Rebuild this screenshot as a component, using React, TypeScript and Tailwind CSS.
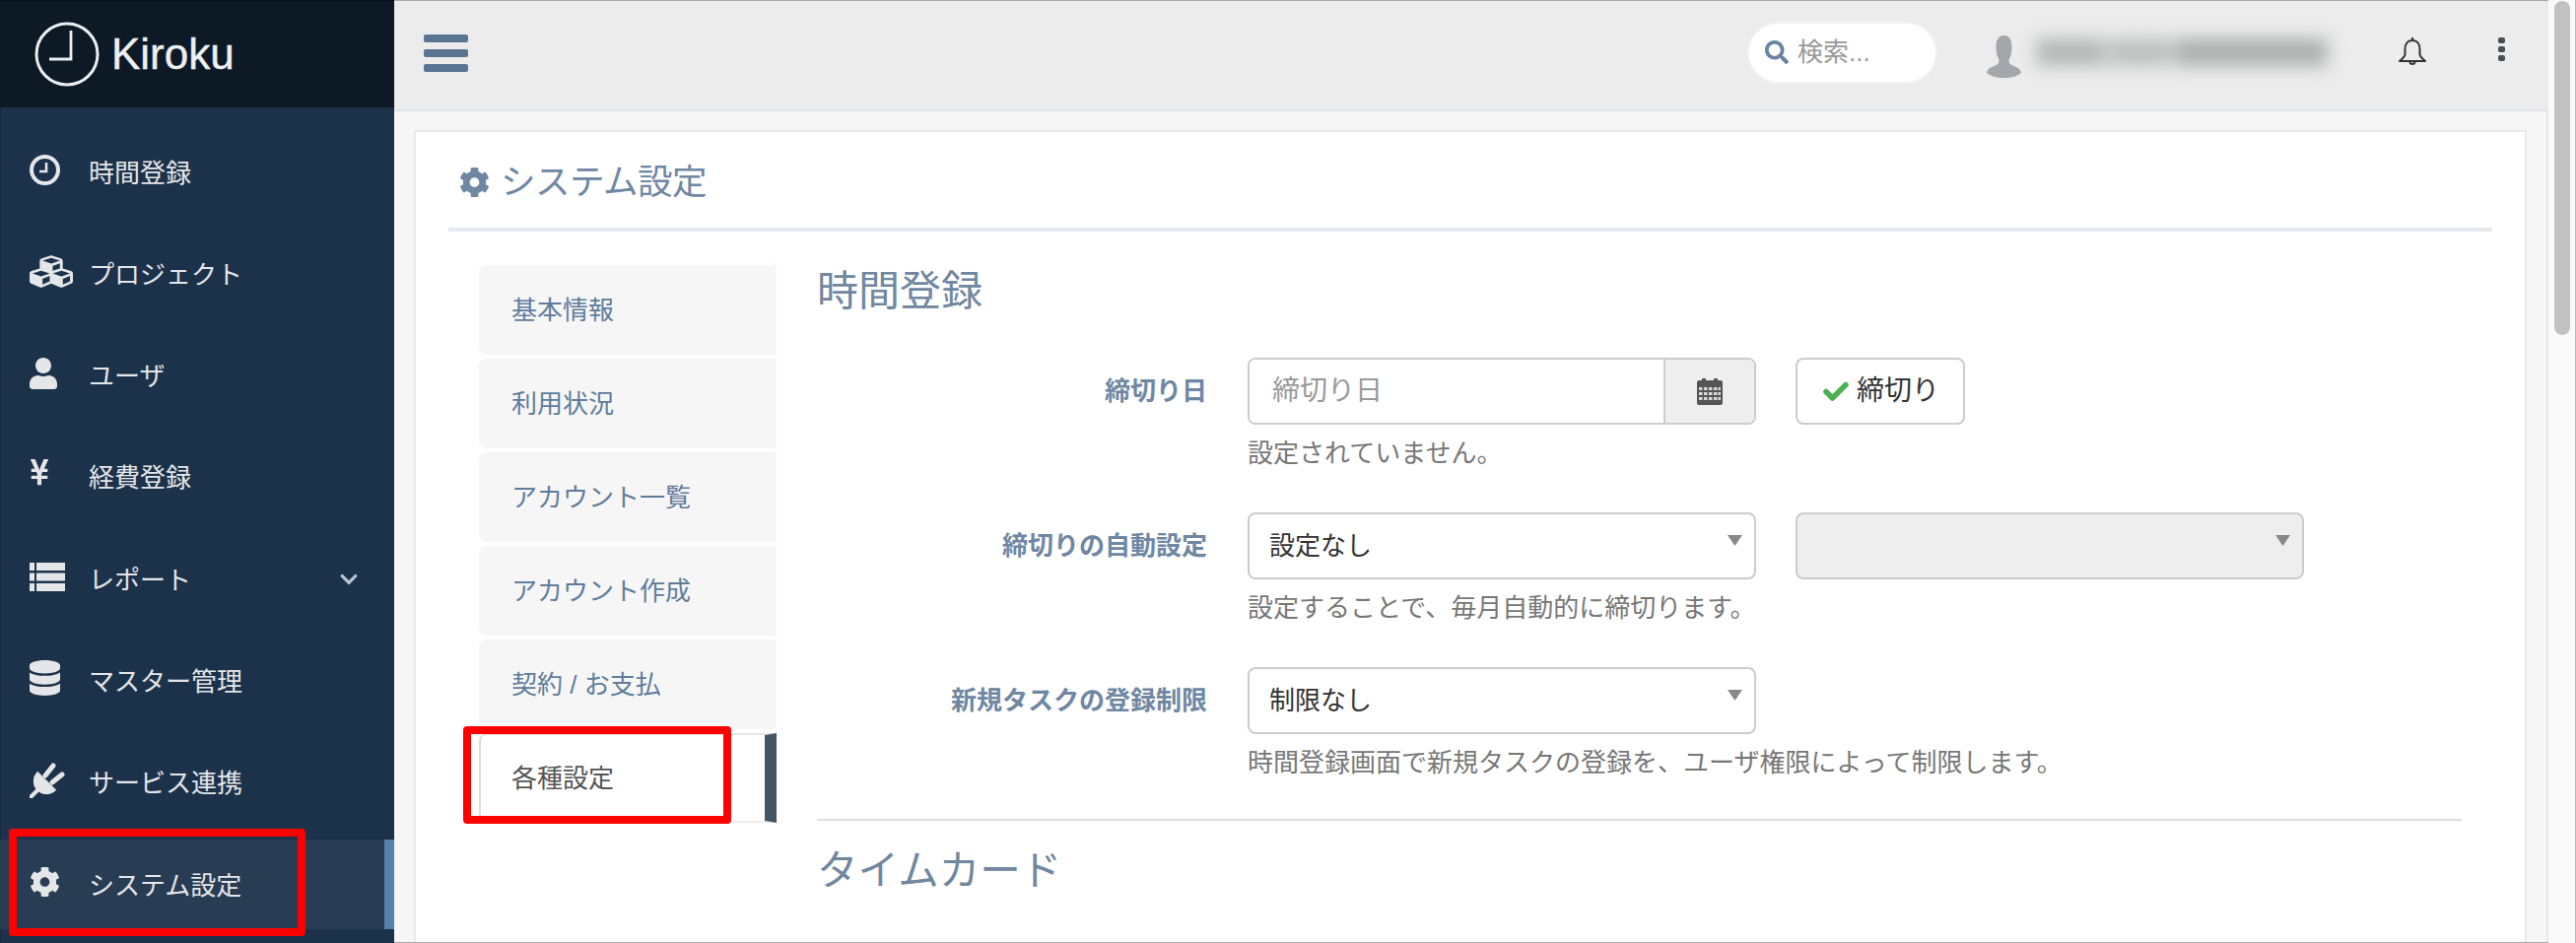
import { FaCubes, FaUser, FaYenSign, FaDatabase, FaCog, FaChevronDown, FaSearch } from "react-icons/fa";

const NAV = [
  {
    label: "時間登録",
    icon: (
      <svg width="31" height="31" viewBox="0 0 31 31" fill="none" stroke="currentColor">
        <circle cx="15.500" cy="15.500" r="13.500" strokeWidth="4" />
        <path d="M17 8v9h-7" strokeWidth="2.600" />
      </svg>
    ),
  },
  { label: "プロジェクト", icon: <FaCubes className="w-[44px] h-[37px]" preserveAspectRatio="none" /> },
  { label: "ユーザ", icon: <FaUser className="w-[28px] h-[32px]" preserveAspectRatio="none" /> },
  { label: "経費登録", icon: <FaYenSign className="w-[20px] h-[30px] -mt-[5px]" preserveAspectRatio="none" /> },
  {
    label: "レポート",
    icon: (
      <svg width="36" height="29" viewBox="0 0 36 29" fill="currentColor">
        <rect y="0" width="5" height="8" /><rect x="7" y="0" width="29" height="8" />
        <rect y="10.500" width="5" height="8" /><rect x="7" y="10.500" width="29" height="8" />
        <rect y="21" width="5" height="8" /><rect x="7" y="21" width="29" height="8" />
      </svg>
    ),
  },
  { label: "マスター管理", icon: <FaDatabase className="w-[31px] h-[36px]" preserveAspectRatio="none" /> },
  {
    label: "サービス連携",
    icon: (
      <svg width="36" height="36" viewBox="0 0 36 36" fill="currentColor" stroke="currentColor" strokeLinecap="round">
        <path d="M1.500 34.500L10 26" strokeWidth="4" fill="none" />
        <path d="M8 9.500A12 12 0 0 0 26.500 28Z" strokeWidth="1" />
        <path d="M16 13L24 3M23 20L33 12" strokeWidth="5" fill="none" />
      </svg>
    ),
  },
  { label: "システム設定", icon: <FaCog className="w-[31px] h-[32px]" />, active: true },
];

const TABS = ["基本情報", "利用状況", "アカウント一覧", "アカウント作成", "契約 / お支払"];

function Arrow() {
  return (
    <svg className="absolute right-[13px] top-[23px] pointer-events-none" width="17" height="11" viewBox="0 0 17 11">
      <polygon points="1,0 16,0 8.5,11" fill="#888888" />
    </svg>
  );
}

function Select({ value, disabled }: { value: string; disabled?: boolean }) {
  return (
    <div className="relative w-[516px] h-[68px]">
      <select
        disabled={disabled}
        defaultValue={value}
        className={`w-full h-full appearance-none border-2 border-[#cccccc] rounded-[8px] pl-[20px] pr-[40px] text-[26px] text-[#333333] ${disabled ? "bg-[#eeeeee]" : "bg-white"}`}
      >
        <option value={value}>{value}</option>
      </select>
      <Arrow />
    </div>
  );
}

function Row({ label, help, children }: { label: string; help: string; children: React.ReactNode }) {
  return (
    <div className="flex mb-[42px]">
      <div className="w-[396px] h-[68px] flex items-center justify-end text-[26px] font-bold text-[#6f87a3]">{label}</div>
      <div className="ml-[41px]">
        <div className="flex gap-[40px]">{children}</div>
        <div className="mt-[11px] h-[36px] leading-[36px] text-[26px] text-[#777777]">{help}</div>
      </div>
    </div>
  );
}

export default function App() {
  return (
    <div className="flex w-[2614px] h-[957px] overflow-hidden bg-white" style={{ fontFamily: '"Liberation Sans", "Noto Sans CJK JP", sans-serif' }}>
      {/* Sidebar */}
      <aside className="w-[400px] shrink-0 h-full bg-[#1c324b] border-l border-[#15293e] flex flex-col">
        <div className="h-[109px] shrink-0 bg-[#0d1a26] border-t border-[#070f16] -ml-px flex items-center pl-[35px]">
          <svg width="66" height="66" viewBox="0 0 66 66" fill="none" className="shrink-0">
            <circle cx="33" cy="33" r="31" stroke="#eceef0" strokeWidth="3" />
            <path d="M37 9 V38 H15" stroke="#eceef0" strokeWidth="2.800" />
          </svg>
          <span className="ml-[12px] text-[44px] text-[#edf0f2] leading-none [-webkit-text-stroke:0.4px_#edf0f2]">Kiroku</span>
        </div>
        <nav className="flex flex-col gap-[12.3px] pt-[20px] -ml-px">
          {NAV.map((n) => (
            <div key={n.label} className={`relative h-[91px] flex items-center pl-[30px] text-[#e4e6e8] ${n.active ? "bg-[#283c54] border-r-[10px] border-[#5581ab]" : ""}`}>
              <span className="w-[60px] h-[40px] shrink-0 flex items-center -mt-[5px]">{n.icon}</span>
              <span className="text-[26px] whitespace-nowrap mt-[3px]">{n.label}</span>
              {n.label === "レポート" && <FaChevronDown className="absolute left-[344px] top-[36px] w-[20px] h-[20px] text-[#b8c4d4]" />}
              {n.active && <div className="absolute left-[9px] -top-[11px] w-[301px] h-[109px] border-[8px] border-[#ff0000] rounded-[4px]" />}
            </div>
          ))}
        </nav>
      </aside>

      {/* Main */}
      <div className="flex-1 min-w-0 flex flex-col bg-[#f6f6f6] border-t border-b border-[#aaaaaa]">
        <header className="h-[112px] shrink-0 bg-[#ececec] border-b-2 border-[#dfe3e8] flex items-center pl-[30px] pr-[44px]">
          <div className="flex flex-col gap-[7px] -mt-[5px]">
            <span className="block w-[45px] h-[8px] rounded-[2px] bg-[#5a7593]" />
            <span className="block w-[45px] h-[8px] rounded-[2px] bg-[#5a7593]" />
            <span className="block w-[45px] h-[8px] rounded-[2px] bg-[#5a7593]" />
          </div>
          <div className="ml-auto w-[193px] h-[63px] -mt-[5px] bg-white border-2 border-[#f0f2f4] rounded-full flex items-center pl-[16px]">
            <FaSearch className="w-[24px] h-[24px] text-[#6a83a3] -mt-[2px]" />
            <span className="ml-[9px] text-[26px] text-[#999999]">検索...</span>
          </div>
          <svg className="ml-[50px] shrink-0 mt-[3px]" width="35" height="43" viewBox="0 0 35 43">
            <path d="M17.5 0C11 0 9.5 6 9.5 12c0 6 1.5 10 3 13 0 3-1 4-3 5-4 2-9 3-9.500 8 3 3 10 5 17.500 5s14.500-2 17.500-5c-.5-5-5.500-6-9.500-8-2-1-3-2-3-5 1.500-3 3-7 3-13 0-6-1.500-12-8-12z" fill="#a3a7ab" />
          </svg>
          <div className="ml-[15px] w-[296px] h-[28px] flex gap-[4px] blur-[9px] -mt-[6px]">
            <span className="w-[72px] bg-[#b4b6b6]" />
            <span className="w-[62px] bg-[#bcbebe]" />
            <span className="w-[158px] bg-[#acaeae]" />
          </div>
          <svg className="ml-[71px] shrink-0 -mt-[8px]" width="30" height="30" viewBox="0 0 30 30" fill="none" stroke="#333333" strokeWidth="2" strokeLinejoin="round">
            <path d="M15 4C10 4 7.500 8 7.500 13v5c0 3-3 4.500-5.500 7h26c-2.500-2.500-5.500-4-5.500-7v-5C22.500 8 20 4 15 4z" />
            <path d="M15 1v3M12.500 25.500a2.500 2.500 0 0 0 5 0" />
          </svg>
          <div className="ml-[72px] flex flex-col gap-[3px] -mt-[12px]">
            <span className="block w-[7px] h-[6px] rounded-[2px] bg-[#4a4d50]" />
            <span className="block w-[7px] h-[6px] rounded-[2px] bg-[#4a4d50]" />
            <span className="block w-[7px] h-[6px] rounded-[2px] bg-[#4a4d50]" />
          </div>
        </header>

        <div className="flex-1 min-h-0 pt-[19px] pl-[20px] pr-[20px] border-r-2 border-[#e6e8ea] overflow-hidden">
          <section className="bg-white border-2 border-[#e6e9ed] px-[33px] h-[900px]">
            <div className="h-[93px] pl-[11px] pt-[4px] flex items-center border-b-[4px] border-[#e6e9ed] box-content text-[#6f87a3]">
              <FaCog className="w-[31px] h-[32px]" />
              <h1 className="ml-[11px] mt-[2px] text-[35.500px] leading-none tracking-[-0.5px]">システム設定</h1>
            </div>

            <div className="flex mt-[30px] pl-[31px] pr-[31px]">
              {/* Tabs */}
              <ul className="w-[302px] shrink-0 pt-[4px] h-[571px] flex flex-col gap-[4px] border-r-2 border-[#f8f8f8]">
                {TABS.map((t) => (
                  <li key={t} className="h-[91px] shrink-0 flex items-center pl-[33px] pt-[2px] bg-[#f6f6f6] rounded-l-[8px] text-[26px] text-[#5f7c9c]">{t}</li>
                ))}
                <li className="relative h-[91px] shrink-0 -mr-[2px] flex items-center pl-[31px] pt-[2px] bg-white rounded-l-[8px] border-l-2 border-t-2 border-b-2 border-l-[#dddddd] border-t-[#e5e5e5] border-b-[#eeeeee] border-r-[12px] border-r-[#445567] text-[26px] text-[#555555]">
                  各種設定
                  <div className="absolute -left-[18px] -top-[9px] w-[272px] h-[99px] border-[8px] border-[#ff0000] rounded-[4px]" />
                </li>
              </ul>

              {/* Settings */}
              <div className="ml-[41px] flex-1 min-w-0">
                <h2 className="pt-[1px] h-[63px] leading-[60px] text-[42px] text-[#71879f] mb-[35px]">時間登録</h2>
                <Row label="締切り日" help="設定されていません。">
                  <div className="flex w-[516px] h-[68px] border-2 border-[#cccccc] rounded-[8px] overflow-hidden">
                    <input placeholder="締切り日" className="flex-1 min-w-0 pl-[23px] text-[28px] text-[#333333] placeholder:text-[#999999] bg-white outline-none" />
                    <div className="w-[92px] shrink-0 bg-[#eeeeee] border-l-2 border-[#cccccc] flex items-center justify-center">
                      <svg width="26" height="28" viewBox="0 0 26 28">
                        <path d="M2 3h3V1h4v2h8V1h4v2h3a2 2 0 0 1 2 2v21a2 2 0 0 1-2 2H2a2 2 0 0 1-2-2V5a2 2 0 0 1 2-2z" fill="#555555" />
                        <g fill="#d8d8d8">
                          <rect x="2" y="10" width="3.500" height="3" /><rect x="7" y="10" width="3.500" height="3" /><rect x="12" y="10" width="3.500" height="3" /><rect x="17" y="10" width="3.500" height="3" /><rect x="21.500" y="10" width="2.500" height="3" />
                          <rect x="2" y="15" width="3.500" height="3" /><rect x="7" y="15" width="3.500" height="3" /><rect x="12" y="15" width="3.500" height="3" /><rect x="17" y="15" width="3.500" height="3" /><rect x="21.500" y="15" width="2.500" height="3" />
                          <rect x="2" y="20" width="3.500" height="3" /><rect x="7" y="20" width="3.500" height="3" /><rect x="12" y="20" width="3.500" height="3" /><rect x="17" y="20" width="3.500" height="3" /><rect x="21.500" y="20" width="2.500" height="3" />
                        </g>
                      </svg>
                    </div>
                  </div>
                  <button className="w-[172px] h-[68px] bg-white border-2 border-[#cccccc] rounded-[8px] flex items-center pl-[26px] text-[28px] text-[#333333]">
                    <svg width="26" height="20" viewBox="0 0 26 20" fill="none" stroke="#4caf50" strokeWidth="5.500" strokeLinejoin="round" strokeLinecap="round">
                      <path d="M3 10.500l6.500 6.500L23 3.500" />
                    </svg>
                    <span className="ml-[8px]">締切り</span>
                  </button>
                </Row>
                <Row label="締切りの自動設定" help="設定することで、毎月自動的に締切ります。">
                  <Select value="設定なし" />
                  <Select value="" disabled />
                </Row>
                <Row label="新規タスクの登録制限" help="時間登録画面で新規タスクの登録を、ユーザ権限によって制限します。">
                  <Select value="制限なし" />
                </Row>
                <div className="h-[2px] -mt-[3px] bg-[#dddddd]" />
                <h2 className="mt-[21px] h-[60px] leading-[60px] text-[41.500px] text-[#71879f]">タイムカード</h2>
              </div>
            </div>
          </section>
        </div>
      </div>

      {/* Scrollbar */}
      <div className="w-[28px] shrink-0 h-full bg-[#fafafa] border-r border-[#bbbbbb] pl-[6px] pt-px">
        <div className="w-[16px] h-[339px] rounded-full bg-[#c2c2c2]" />
      </div>
    </div>
  );
}
